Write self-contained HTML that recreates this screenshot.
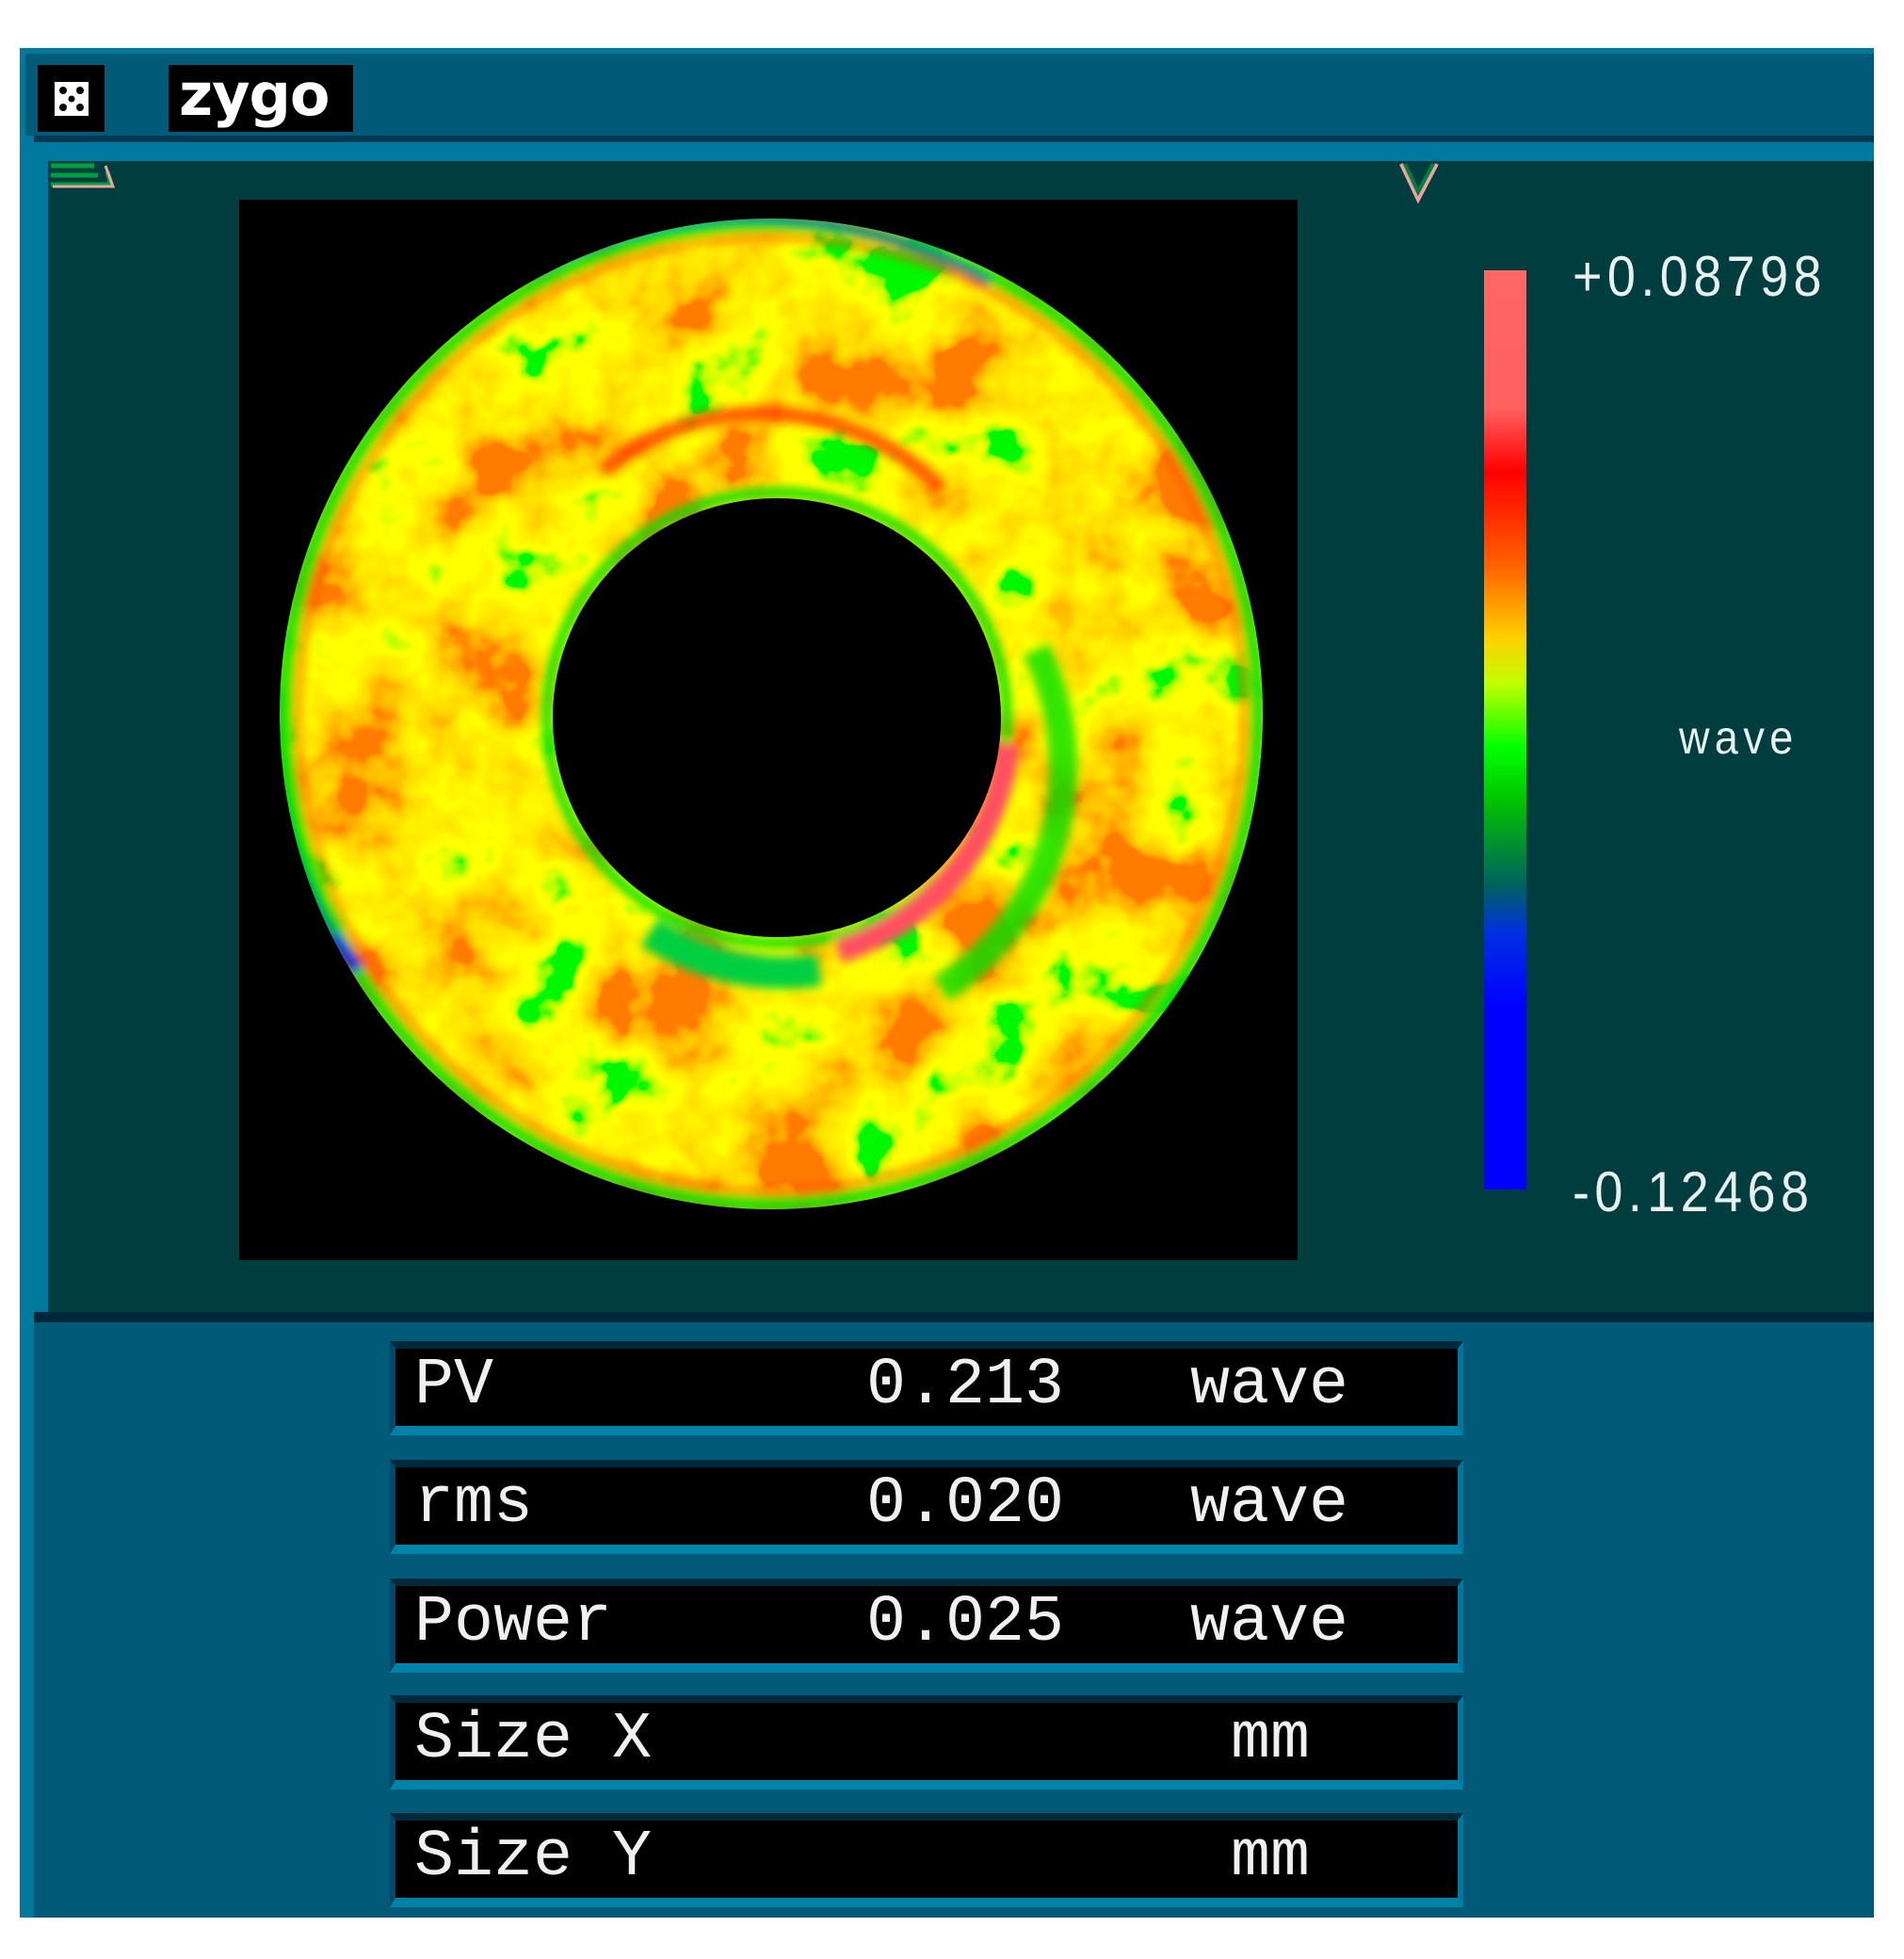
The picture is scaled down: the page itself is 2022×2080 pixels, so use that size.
<!DOCTYPE html>
<html><head><meta charset="utf-8">
<style>
*{margin:0;padding:0;box-sizing:border-box}
html,body{width:2022px;height:2080px;background:#fff;overflow:hidden;position:relative;font-family:"Liberation Sans",sans-serif}
.a{position:absolute}
.row{position:absolute;left:414px;width:1140px;height:100px;background:#000;
 border-top:8px solid #002a3c;border-bottom:10px solid #0083a8;border-right:6px solid #0077a0;border-left:6px solid #004a66}
.row span{position:absolute;top:5px;font-family:"Liberation Mono",monospace;font-size:70px;color:#f0f0f0;line-height:70px}
.num{font-family:"Liberation Sans",sans-serif;color:#e8f0f0;font-size:60px;letter-spacing:6px;transform:scaleX(.9);transform-origin:left top;line-height:60px}
</style></head><body>
<!-- frame -->
<div class="a" style="left:21px;top:51px;width:1969px;height:1985px;background:#007a9c"></div>
<div class="a" style="left:27px;top:57px;width:1963px;height:87px;background:#005a78"></div>
<div class="a" style="left:36px;top:144px;width:1954px;height:7px;background:#003a52"></div>
<div class="a" style="left:36px;top:151px;width:1954px;height:20px;background:#0079a0"></div>
<div class="a" style="left:40px;top:69px;width:71px;height:71px;background:#000"></div>
<svg class="a" style="left:57px;top:86px" width="38" height="38" viewBox="0 0 38 38"><rect x="1" y="1" width="36" height="36" fill="#fff"/><circle cx="10" cy="10" r="4" fill="#000"/><circle cx="28" cy="10" r="4" fill="#000"/><circle cx="10" cy="28" r="4" fill="#000"/><circle cx="28" cy="28" r="4" fill="#000"/><circle cx="19" cy="19" r="3.5" fill="#000"/></svg>
<div class="a" style="left:179px;top:69px;width:196px;height:71px;background:#000"></div>
<div class="a" style="left:190px;top:64px;font-family:'DejaVu Sans',sans-serif;font-weight:bold;font-size:62px;color:#fff;letter-spacing:-1px">zygo</div>
<!-- dark panel -->
<div class="a" style="left:51px;top:171px;width:1939px;height:1222px;background:#003d3e"></div>
<div class="a" style="left:36px;top:1393px;width:1954px;height:11px;background:#00283c"></div>
<div class="a" style="left:36px;top:1404px;width:1954px;height:632px;background:#005a78"></div>
<svg class="a" style="left:52px;top:170px" width="72" height="32"><path d="M2 6 H48 M2 16 H52 M2 26 H66 L62 12" stroke="#00a040" stroke-width="5" fill="none"/><path d="M4 28 H68 L60 6" stroke="#f0a0a0" stroke-width="3" fill="none"/></svg>
<svg class="a" style="left:1482px;top:172px" width="50" height="46"><path d="M6 2 L24 40 L44 2" stroke="#f0a0a0" stroke-width="4" fill="none"/><path d="M10 2 L24 32 L40 2" stroke="#008040" stroke-width="4" fill="none"/></svg>
<!-- image -->
<div class="a" style="left:254px;top:212px;width:1124px;height:1126px;background:#000"></div>
<svg class="a" style="left:254px;top:212px" width="1124" height="1126" viewBox="254 212 1124 1126">
<defs>
<filter id="n" x="0" y="0" width="100%" height="100%">
<feTurbulence type="fractalNoise" baseFrequency="0.009" numOctaves="4" seed="11"/>
<feColorMatrix type="matrix" values="1 0 0 0 0 1 0 0 0 0 1 0 0 0 0 0 0 0 0 1"/>
<feComponentTransfer>
<feFuncR type="linear" slope="2.3" intercept="-0.62"/>
<feFuncG type="linear" slope="2.3" intercept="-0.62"/>
<feFuncB type="linear" slope="2.3" intercept="-0.62"/>
</feComponentTransfer>
<feComponentTransfer>
<feFuncR type="table" tableValues="0 0.6 1 1 1 1 1 1 1 1"/>
<feFuncG type="table" tableValues="0.95 1 1 1 0.9 0.8 0.7 0.55 0.4 0.2"/>
<feFuncB type="table" tableValues="0 0 0 0 0 0 0 0 0 0"/>
<feFuncA type="table" tableValues="1 1"/>
</feComponentTransfer>
</filter>
<filter id="b"><feGaussianBlur stdDeviation="5"/></filter>
<mask id="ring"><rect x="254" y="212" width="1124" height="1126" fill="#000"/><ellipse cx="819" cy="758" rx="522" ry="526" fill="#fff"/><ellipse cx="825" cy="762" rx="238" ry="233" fill="#000"/></mask>
</defs>
<g mask="url(#ring)">
<rect x="254" y="212" width="1124" height="1126" filter="url(#n)"/>
<g filter="url(#b)">
<ellipse cx="819" cy="758" rx="516" ry="520" fill="none" stroke="#00e000" stroke-width="14"/>
<ellipse cx="819" cy="758" rx="503" ry="507" fill="none" stroke="#ff3000" stroke-width="8" opacity=".6"/>
<path d="M345 470 A500 500 0 0 0 380 1030" stroke="#0020e0" stroke-width="14" fill="none"/>
<path d="M330 520 A490 490 0 0 0 360 990" stroke="#00e000" stroke-width="20" fill="none" opacity=".7"/>
<path d="M560 290 A500 500 0 0 1 1050 300" stroke="#2040c0" stroke-width="10" fill="none" opacity=".7"/>
<ellipse cx="825" cy="762" rx="244" ry="239" fill="none" stroke="#00e000" stroke-width="10"/>
<path d="M1070 790 A255 255 0 0 1 890 1010" stroke="#ff5060" stroke-width="26" fill="none"/>
<path d="M690 990 A260 260 0 0 0 870 1030" stroke="#00d040" stroke-width="34" fill="none"/>
<path d="M640 500 A265 265 0 0 1 1000 520" stroke="#ff2000" stroke-width="16" fill="none" opacity=".7"/>
<path d="M1100 690 A280 280 0 0 1 1000 1050" stroke="#00e000" stroke-width="30" fill="none" opacity=".8"/>
</g>
</g>
</svg>
<!-- colorbar -->
<div class="a" style="left:1576px;top:287px;width:45px;height:976px;background:linear-gradient(#ff6666 0%,#ff6060 15%,#ff0000 22%,#ff6000 32%,#ffd000 40%,#c0ff00 45%,#00ff00 52%,#00c000 58%,#006060 67%,#0030e0 72%,#0000ff 80%,#0000ff 100%)"></div>
<div class="a num" style="left:1670px;top:264px">+0.08798</div>
<div class="a num" style="left:1783px;top:758px;font-size:50px;line-height:50px">wave</div>
<div class="a num" style="left:1670px;top:1236px">-0.12468</div>
<!-- rows -->
<div class="row" style="top:1424px"><span style="left:20px">PV</span><span style="left:500px">0.213</span><span style="left:844px">wave</span></div>
<div class="row" style="top:1550px"><span style="left:20px">rms</span><span style="left:500px">0.020</span><span style="left:844px">wave</span></div>
<div class="row" style="top:1676px"><span style="left:20px">Power</span><span style="left:500px">0.025</span><span style="left:844px">wave</span></div>
<div class="row" style="top:1800px"><span style="left:20px">Size X</span><span style="left:887px">mm</span></div>
<div class="row" style="top:1925px"><span style="left:20px">Size Y</span><span style="left:887px">mm</span></div>
</body></html>
